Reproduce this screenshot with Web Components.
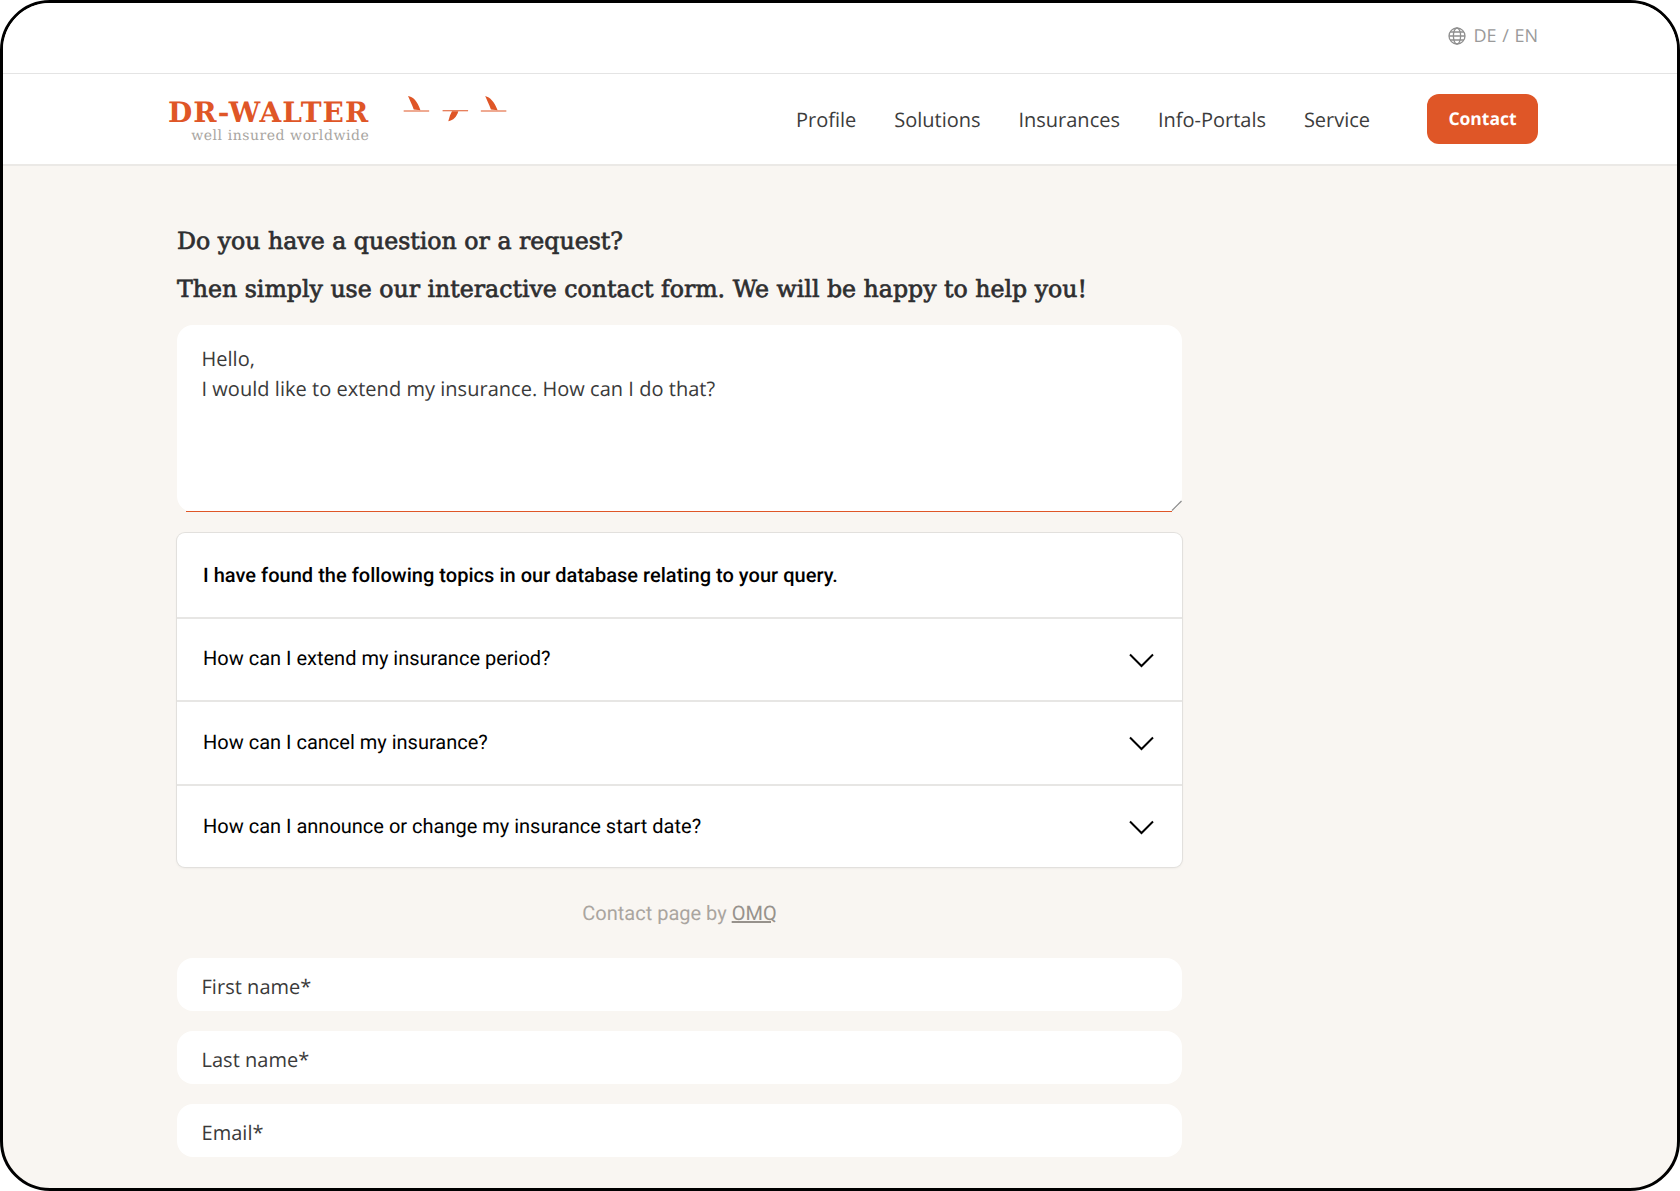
<!DOCTYPE html>
<html lang="en">
<head>
<meta charset="utf-8">
<title>DR-WALTER contact</title>
<style>
  html, body { margin: 0; background: #fff; }
</style>
</head>
<body>
<device-frame>
  <lang-bar></lang-bar>
  <site-header></site-header>
  <contact-page>
    <text-field multiline>Hello,<br>I would like to extend my insurance. How can I do that?</text-field>
    <topic-list>
      <topic-row>How can I extend my insurance period?</topic-row>
      <topic-row>How can I cancel my insurance?</topic-row>
      <topic-row>How can I announce or change my insurance start date?</topic-row>
    </topic-list>
    <p-credit></p-credit>
    <text-field>First name*</text-field>
    <text-field>Last name*</text-field>
    <text-field>Email*</text-field>
  </contact-page>
</device-frame>
<script>
class DeviceFrame extends HTMLElement {
  constructor() {
    super();
    this.attachShadow({ mode: 'open' });
  }
  connectedCallback() {
    this.shadowRoot.innerHTML = `
      <style>
        :host {
          display: flex;
          flex-direction: column;
          box-sizing: border-box;
          width: 1680px;
          height: 1191px;
          border: 3px solid #000;
          border-radius: 50px;
          overflow: hidden;
          background: #f9f6f2;
          font-family: "Open Sans", sans-serif;
          text-rendering: geometricPrecision;
        }
      </style>
      <slot></slot>
    `;
  }
}

class LangBar extends HTMLElement {
  constructor() {
    super();
    this.attachShadow({ mode: 'open' });
  }
  connectedCallback() {
    this.shadowRoot.innerHTML = `
      <style>
        :host {
          display: flex;
          align-items: center;
          justify-content: flex-end;
          gap: 7px;
          box-sizing: border-box;
          height: 71px;
          padding: 0 139px 5px 0;
          background: #fff;
          border-bottom: 1px solid #e4e4e4;
          color: #9a9a9a;
          font-size: 18px;
          word-spacing: 1px;
        }
        svg { display: block; }
      </style>
      <svg width="18" height="18" viewBox="0 0 18 18" fill="none" stroke="#8f8f8f" stroke-width="1.3">
        <circle cx="9" cy="9" r="8"/>
        <ellipse cx="9" cy="9" rx="3.6" ry="8"/>
        <path d="M1 9h16M2.1 5h13.8M2.1 13h13.8"/>
      </svg>
      <span>DE / EN</span>
    `;
  }
}

class SiteHeader extends HTMLElement {
  constructor() {
    super();
    this.attachShadow({ mode: 'open' });
  }
  connectedCallback() {
    const links = ['Profile', 'Solutions', 'Insurances', 'Info-Portals', 'Service'];
    this.shadowRoot.innerHTML = `
      <style>
        :host {
          display: flex;
          align-items: center;
          box-sizing: border-box;
          height: 92px;
          padding: 0 139px 0 165px;
          background: #fff;
          border-bottom: 2px solid #ebe9e6;
        }
        .logo { display: flex; align-items: flex-start; gap: 34px; margin-top: 6px; }
        .mark { display: flex; flex-direction: column; align-items: flex-end; }
        .name {
          font-family: "DejaVu Serif", serif;
          font-weight: 700;
          font-size: 28px;
          line-height: 28px;
          letter-spacing: 1.05px;
          color: #df5627;
        }
        .claim {
          margin-top: 1px;
          font-family: "DejaVu Serif", serif;
          font-size: 14px;
          line-height: 17px;
          letter-spacing: 0.55px;
          color: #a8a5a1;
        }
        .birds { display: block; margin-top: -4px; }
        nav {
          margin-left: auto;
          display: flex;
          align-items: center;
          gap: 37.9px;
          font-size: 20px;
          color: #3c3c3c;
        }
        .contact {
          margin-left: 19px;
          display: flex;
          align-items: center;
          justify-content: center;
          width: 111px;
          height: 50px;
          border-radius: 12px;
          background: #df5627;
          color: #fff;
          font-size: 17.5px;
          font-weight: 700;
        }
      </style>
      <div class="logo">
        <div class="mark">
          <span class="name">DR-WALTER</span>
          <span class="claim">well insured worldwide</span>
        </div>
        <svg class="birds" width="104" height="27" viewBox="40 35 310 80" fill="#df5627" stroke="none">
          <path d="M55 38C70 40 82 52 92 80L72 78C66 62 60 50 55 38Z"/>
          <path d="M42 81H118V84H42Z"/>
          <path d="M205 83C200 100 190 110 175 113L180 96L186 83Z"/>
          <path d="M158 80H234V83H158Z"/>
          <path d="M285 38C300 42 312 55 322 80L302 78C296 62 290 50 285 38Z"/>
          <path d="M272 81H348V84H272Z"/>
        </svg>
      </div>
      <nav>
        ${links.map(l => `<span>${l}</span>`).join('')}
        <span class="contact">Contact</span>
      </nav>
    `;
  }
}

class ContactPage extends HTMLElement {
  constructor() {
    super();
    this.attachShadow({ mode: 'open' });
  }
  connectedCallback() {
    this.shadowRoot.innerHTML = `
      <style>
        :host {
          display: flex;
          flex-direction: column;
          box-sizing: border-box;
          width: 1179px;
          padding: 51px 0 0 174px;
        }
        h2 {
          margin: 0;
          font-family: "DejaVu Serif", serif;
          font-weight: 400;
          font-size: 23.65px;
          line-height: 48px;
          color: #2e2e30;
          -webkit-text-stroke: 0.7px #2e2e30;
        }
        .lead { margin-bottom: 12px; }
      </style>
      <div class="lead">
        <h2>Do you have a question or a request?</h2>
        <h2>Then simply use our interactive contact form. We will be happy to help you!</h2>
      </div>
      <slot></slot>
    `;
  }
}

class TextField extends HTMLElement {
  constructor() {
    super();
    this.attachShadow({ mode: 'open' });
  }
  connectedCallback() {
    const multi = this.hasAttribute('multiline');
    this.shadowRoot.innerHTML = `
      <style>
        :host {
          display: block;
          position: relative;
          box-sizing: border-box;
          height: ${multi ? '187px' : '53px'};
          margin-bottom: 20px;
          padding: ${multi ? '18.5px' : '14px'} 24.5px 0;
          background: #fff;
          border-radius: 16px;
          font-family: "Open Sans", sans-serif;
          font-size: 20px;
          line-height: 30px;
          letter-spacing: 0.03px;
          color: #3a3a3a;
        }
        .line { position: absolute; left: 9px; right: 10px; bottom: 0; height: 1px; background: #df5627; }
        svg { position: absolute; right: 0; bottom: 1px; display: block; }
      </style>
      <slot></slot>
      ${multi ? `<div class="line"></div><svg width="11" height="11" viewBox="0 0 11 11"><path d="M1 10.5L10.5 1" stroke="#8d8d8d" stroke-width="1.2" fill="none"/></svg>` : ''}
    `;
  }
}

class TopicList extends HTMLElement {
  constructor() {
    super();
    this.attachShadow({ mode: 'open' });
  }
  connectedCallback() {
    this.shadowRoot.innerHTML = `
      <style>
        :host {
          display: block;
          box-sizing: border-box;
          background: #fff;
          border-radius: 8px;
          box-shadow: 0 0 0 1px #e2e0dd, 0 1px 3px rgba(0, 0, 0, 0.08);
          margin-top: 1px;
          overflow: hidden;
          font-family: Roboto, sans-serif;
          font-size: 20px;
          color: #000;
        }
        .title {
          display: flex;
          align-items: center;
          box-sizing: border-box;
          height: 83.6px;
          padding: 0 26px;
          font-weight: 500;
          letter-spacing: 0.03px;
        }
      </style>
      <div class="title">I have found the following topics in our database relating to your query.</div>
      <slot></slot>
    `;
  }
}

class TopicRow extends HTMLElement {
  constructor() {
    super();
    this.attachShadow({ mode: 'open' });
  }
  connectedCallback() {
    this.shadowRoot.innerHTML = `
      <style>
        :host {
          display: flex;
          align-items: center;
          justify-content: space-between;
          box-sizing: border-box;
          height: 83.6px;
          padding: 0 28px 2px 26px;
          border-top: 2px solid #e7e6e4;
        }
        svg { display: block; margin-top: 4px; }
      </style>
      <span><slot></slot></span>
      <svg width="25" height="15" viewBox="0 0 25 15" fill="none" stroke="#000" stroke-width="2">
        <path d="M1 1.5L12.5 13L24 1.5"/>
      </svg>
    `;
  }
}

class PCredit extends HTMLElement {
  constructor() {
    super();
    this.attachShadow({ mode: 'open' });
  }
  connectedCallback() {
    this.shadowRoot.innerHTML = `
      <style>
        :host {
          display: block;
          box-sizing: border-box;
          height: 90.6px;
          padding-top: 32.6px;
          text-align: center;
          font-family: Roboto, sans-serif;
          font-size: 20px;
          line-height: 26px;
          color: #aaa59f;
        }
        a { color: #97928c; text-decoration: underline; }
      </style>
      Contact page by <a>OMQ</a>
    `;
  }
}

customElements.define('device-frame', DeviceFrame);
customElements.define('lang-bar', LangBar);
customElements.define('site-header', SiteHeader);
customElements.define('contact-page', ContactPage);
customElements.define('text-field', TextField);
customElements.define('topic-list', TopicList);
customElements.define('topic-row', TopicRow);
customElements.define('p-credit', PCredit);
</script>
</body>
</html>
